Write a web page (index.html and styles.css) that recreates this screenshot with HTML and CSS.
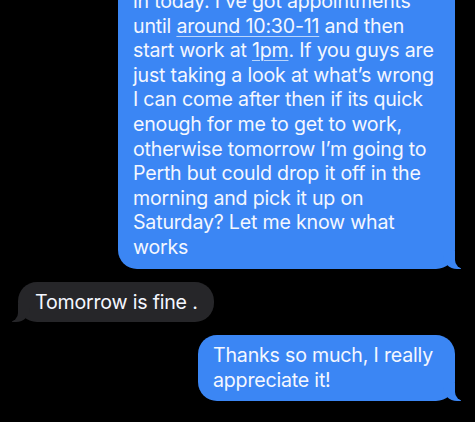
FILE: index.html
```html
<!DOCTYPE html>
<html>
<head>
    <title>Messages</title>
    <link rel="stylesheet" href="styles.css">
</head>
<body>
    <div class="thread">
        <div class="bubble sent first">
            in today. I’ve got appointments<br>
            until <span class="link">around 10:30-11</span> and then<br>
            start work at <span class="link">1pm</span>. If you guys are<br>
            just taking a look at what’s wrong<br>
            I can come after then if its quick<br>
            enough for me to get to work,<br>
            otherwise tomorrow I’m going to<br>
            Perth but could drop it off in the<br>
            morning and pick it up on<br>
            Saturday? Let me know what<br>
            works
        </div>
        <div class="bubble received">Tomorrow is fine .</div>
        <div class="bubble sent last">Thanks so much, I really<br>appreciate it!</div>
    </div>
</body>
</html>
```

FILE: styles.css
```css
body {
    margin: 0;
    background: #000;
    font-family: Inter, "Noto Sans", sans-serif;
    overflow: hidden;
}
.thread {
    display: flex;
    flex-direction: column;
    gap: 13px;
    padding-right: 20px;
}
.bubble {
    position: relative;
    font-size: 19.6px;
    line-height: 24.6px;
    letter-spacing: -0.2px;
    color: #f4f7ff;
    border-radius: 19px;
    padding: 8px 14px 9px 15px;
    white-space: nowrap;
}
.sent {
    background: #3b86f4;
    align-self: flex-end;
}
.first {
    width: 308px;
    margin-top: -19px;
}
.last {
    width: 228px;
}
.received {
    background: #262629;
    align-self: flex-start;
    margin-left: 18px;
    padding: 8px 16px 8px 17px;
}
.link {
    text-decoration: underline;
    text-decoration-thickness: 1px;
    text-underline-offset: 3px;
    text-decoration-color: rgba(255, 255, 255, 0.65);
}
/* tails */
.sent::before,
.received::before {
    content: "";
    position: absolute;
    bottom: 0;
    width: 18px;
    height: 18px;
}
.sent::after,
.received::after {
    content: "";
    position: absolute;
    bottom: 0;
    width: 10px;
    height: 18px;
    background: #000;
}
.sent::before {
    right: -6px;
    background: #3b86f4;
    border-bottom-left-radius: 14px;
}
.sent::after {
    right: -10px;
    border-bottom-left-radius: 9px;
}
.received::before {
    left: -6px;
    background: #262629;
    border-bottom-right-radius: 14px;
}
.received::after {
    left: -10px;
    border-bottom-right-radius: 9px;
}
```
